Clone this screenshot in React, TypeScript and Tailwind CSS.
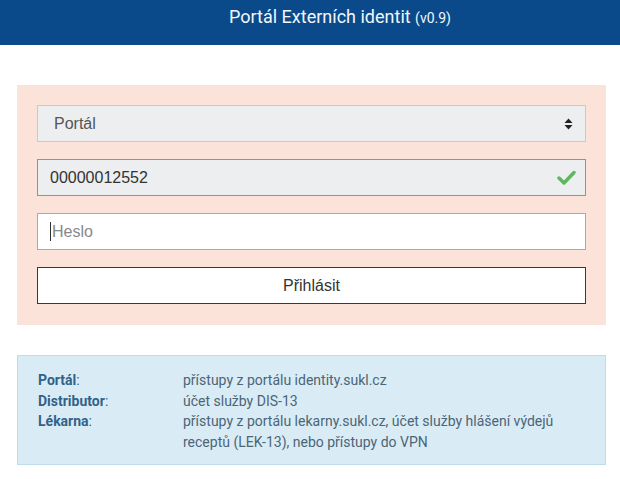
import React from "react";

export default function App() {
  return (
    <div className="min-h-[479px] w-[620px] bg-white" style={{ fontFamily: "Roboto, 'Liberation Sans', sans-serif" }}>
      <header className="flex h-[45px] items-start justify-center bg-[#0b4a8a] pl-[60px] pt-[7px] text-[#f2f6fb]">
        <span className="text-[18px] leading-[20px]">
          Portál Externích identit <span className="text-[14px]">(v0.9)</span>
        </span>
      </header>

      <div className="ml-[17px] mr-[14px] mt-[40px] flex flex-col gap-[17px] bg-[#fbe3da] px-[20px] pb-[21px] pt-[20px]" style={{ fontFamily: "'Liberation Sans', Arial, sans-serif" }}>
        <div className="flex h-[37px] items-center justify-between border border-[#c9c9c9] bg-[#eceef0] pl-[16px] pr-[12px] text-[16px] text-[#555]">
          <span>Portál</span>
          <svg width="9" height="12" viewBox="0 0 9 12">
            <path d="M4.5 0.5 L8.5 5 L0.5 5 Z" fill="#222" />
            <path d="M4.5 11.5 L8.5 7 L0.5 7 Z" fill="#222" />
          </svg>
        </div>
        <div className="flex h-[37px] items-center justify-between border border-[#7cab56] bg-[#eceef0] pl-[12px] pr-[9px] text-[16px] text-[#333]">
          <span>00000012552</span>
          <svg width="19" height="15" viewBox="0 0 19 15">
            <path d="M2 8 L7 13 L17 2.5" fill="none" stroke="#5cb85c" strokeWidth="3.4" strokeLinecap="round" strokeLinejoin="round" />
          </svg>
        </div>
        <div className="flex h-[37px] items-center border border-[#8fb0cc] bg-white pl-[12px] text-[16px] text-[#888]">
          <span className="mr-[1px] inline-block h-[19px] w-[1px] bg-[#333]" />
          <span>Heslo</span>
        </div>
        <div className="flex h-[37px] items-center justify-center border border-[#2b3a4d] bg-white text-[16px] text-[#333]">
          Přihlásit
        </div>
      </div>

      <div className="ml-[17px] mr-[14px] mt-[30px] border border-[#bcdde9] bg-[#d9ecf6] pb-[12px] pl-[20px] pr-[10px] pt-[14px] text-[14px] leading-[20.5px] text-[#4b6577]">
        <div className="flex">
          <div className="w-[145px] shrink-0 text-[#31628a]"><b className="font-bold">Portál</b>:</div>
          <div>přístupy z portálu identity.sukl.cz</div>
        </div>
        <div className="flex">
          <div className="w-[145px] shrink-0 text-[#31628a]"><b className="font-bold">Distributor</b>:</div>
          <div>účet služby DIS-13</div>
        </div>
        <div className="flex">
          <div className="w-[145px] shrink-0 text-[#31628a]"><b className="font-bold">Lékarna</b>:</div>
          <div className="w-[380px]">přístupy z portálu lekarny.sukl.cz, účet služby hlášení výdejů receptů (LEK-13), nebo přístupy do VPN</div>
        </div>
      </div>
    </div>
  );
}
